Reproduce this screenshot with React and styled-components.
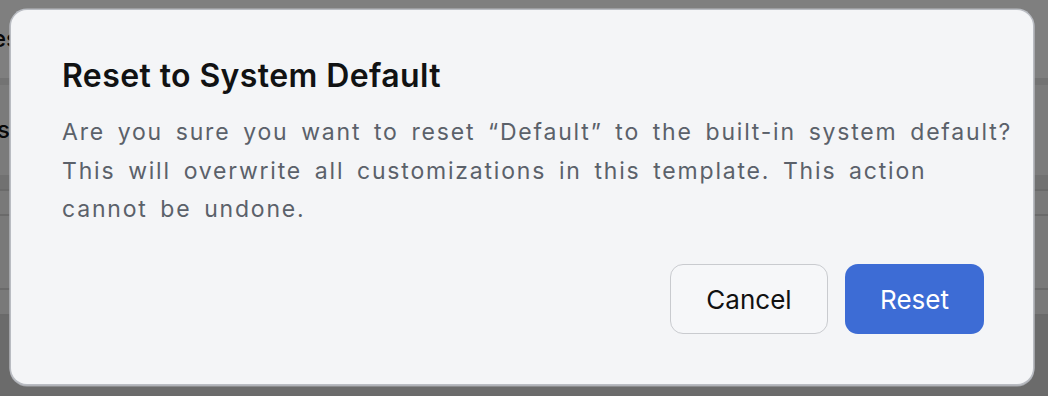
import React from 'react';
import styled, { createGlobalStyle } from 'styled-components';

const GlobalStyle = createGlobalStyle`
  * { box-sizing: border-box; }
  html, body { margin: 0; padding: 0; }
  body {
    width: 1048px;
    height: 396px;
    overflow: hidden;
    font-family: Inter, "Noto Sans", "Liberation Sans", sans-serif;
    -webkit-font-smoothing: antialiased;
  }
`;

const Screen = styled.div`
  position: relative;
  width: 1048px;
  height: 396px;
  overflow: hidden;
  background: #ffffff;
`;

/* the app that sits under the modal */
const AppBehind = styled.div`
  display: flex;
  flex-direction: column;
  height: 100%;
`;

const BehindHeader = styled.div`
  height: ${(p) => p.$h}px;
  display: flex;
  align-items: center;
  background: ${(p) => p.$bg || '#ffffff'};
  border-bottom: ${(p) => (p.$band ? '7px solid #e6e6e6' : 'none')};
`;

/* only the tail of the label peeks out from behind the dialog */
const BehindLabel = styled.div`
  width: ${(p) => p.$w}px;
  display: flex;
  justify-content: flex-end;
  white-space: nowrap;
  font-size: 24px;
  font-weight: 500;
  color: #111;
`;

const BehindRow = styled.div`
  height: ${(p) => p.$h}px;
  background: ${(p) => p.$bg || '#f2f2f2'};
  border-bottom: 2px solid #d4d4d4;
`;

const Overlay = styled.div`
  position: absolute;
  inset: 0;
  background: rgba(0, 0, 0, 0.5);
  display: flex;
  align-items: flex-start;
  justify-content: flex-start;
  padding: 10px 0 0 11px;
`;

const Dialog = styled.div`
  width: 1022px;
  height: 374px;
  background: #f4f5f7;
  border-radius: 16px;
  box-shadow: 0 0 0 1.5px #b9bcc2, 0 1px 0 1.5px #a9abb0;
  padding: 46px 49px 50px 51px;
  display: flex;
  flex-direction: column;
`;

const Title = styled.h2`
  margin: 0;
  font-size: 32px;
  line-height: 40px;
  font-weight: 600;
  letter-spacing: 0.4px;
  color: #111213;
`;

const Message = styled.p`
  margin: 17px 0 0;
  width: 956px;
  font-size: 23px;
  line-height: 38.7px;
  font-weight: 400;
  letter-spacing: 1.8px;
  word-spacing: 4.5px;
  color: #5b616a;
`;

const Actions = styled.div`
  margin-top: auto;
  display: flex;
  justify-content: flex-end;
  gap: 17px;
`;

const Button = styled.button`
  height: 70px;
  min-width: ${(p) => p.$w}px;
  padding: 0 24px;
  border-radius: 13px;
  font-family: inherit;
  font-size: 26px;
  font-weight: 400;
  cursor: pointer;
  border: ${(p) => (p.$primary ? 'none' : '1.5px solid #c9cbcf')};
  background: ${(p) => (p.$primary ? '#3d6cd5' : '#f6f7f9')};
  color: ${(p) => (p.$primary ? '#ffffff' : '#111111')};
`;

export default function App() {
  return (
    <Screen>
      <GlobalStyle />
      <AppBehind>
        <BehindHeader $h={85} $band>
          <BehindLabel $w={19}>Templates</BehindLabel>
        </BehindHeader>
        <BehindHeader $h={90} $bg="#f7f7f7">
          <BehindLabel $w={10}>Rules</BehindLabel>
        </BehindHeader>
        <BehindRow $h={16} $bg="#e2e2e2" />
        <BehindRow $h={26} />
        <BehindRow $h={74} />
        <BehindRow $h={26} />
        <BehindRow $h={80} $bg="#d6d6d6" />
      </AppBehind>
      <Overlay>
        <Dialog role="dialog" aria-labelledby="reset-title">
          <Title id="reset-title">Reset to System Default</Title>
          <Message>
            Are you sure you want to reset “Default” to the built-in system default?
            This will overwrite all customizations in this template. This action
            cannot be undone.
          </Message>
          <Actions>
            <Button $w={158}>Cancel</Button>
            <Button $w={139} $primary>Reset</Button>
          </Actions>
        </Dialog>
      </Overlay>
    </Screen>
  );
}
